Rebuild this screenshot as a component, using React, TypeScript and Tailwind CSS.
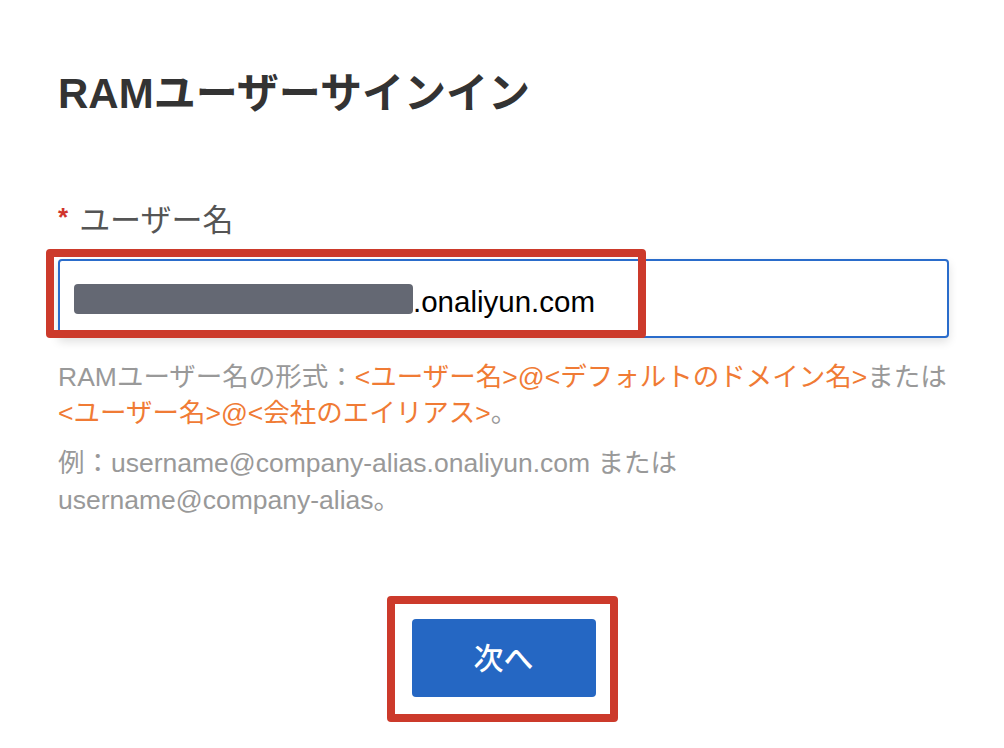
import React from "react";

export default function App() {
  const font = { fontFamily: '"Liberation Sans", "Noto Sans CJK JP", sans-serif' };
  return (
    <div
      className="w-[1004px] h-[748px] bg-white pl-[58px] pr-[55px] overflow-hidden"
      style={font}
    >
      <h1 className="pt-[66px] text-[42px] leading-[56px] font-semibold text-[#333333]">
        RAMユーザーサインイン
      </h1>

      <div className="mt-[79px] flex items-center text-[31px] leading-[40px] text-[#555555]">
        <span className="text-[#d0342c] text-[26px] font-bold mr-[11px] relative top-[-4px]">*</span>
        <span>ユーザー名</span>
      </div>

      <div className="relative mt-[18px]">
        <div className="h-[79px] border-2 border-[#2a6ccb] rounded-[4px] bg-white flex items-center pl-[14px] shadow-[0_4px_10px_rgba(0,0,0,0.12)]">
          <div className="w-[339px] h-[30px] rounded-[4px] bg-[#646873]" />
          <span className="text-[29.5px] text-black leading-none relative top-[3px]">.onaliyun.com</span>
        </div>
        <div className="absolute left-[-12px] top-[-10px] w-[600px] h-[89px] border-[8px] border-[#cc3a2b] rounded-[4px] pointer-events-none" />
      </div>

      <p className="mt-[21px] text-[26.5px] leading-[36px] text-[#999999] whitespace-nowrap">
        RAMユーザー名の形式：
        <span className="text-[#f07b35]">&lt;ユーザー名&gt;@&lt;デフォルトのドメイン名&gt;</span>
        または
        <br />
        <span className="text-[#f07b35]">&lt;ユーザー名&gt;@&lt;会社のエイリアス&gt;</span>。
      </p>

      <p className="mt-[14px] text-[26.5px] leading-[37px] text-[#999999]">
        例：username@company-alias.onaliyun.com または
        <br />
        username@company-alias。
      </p>

      <div className="mt-[100px] flex justify-center">
        <div className="relative">
          <button className="w-[184px] h-[78px] rounded-[4px] bg-[#2567c3] text-white text-[30px] font-medium flex items-center justify-center">
            次へ
          </button>
          <div className="absolute left-[-25px] top-[-23px] w-[231px] h-[126px] border-[8px] border-[#cc3a2b] rounded-[4px] pointer-events-none" />
        </div>
      </div>
    </div>
  );
}
